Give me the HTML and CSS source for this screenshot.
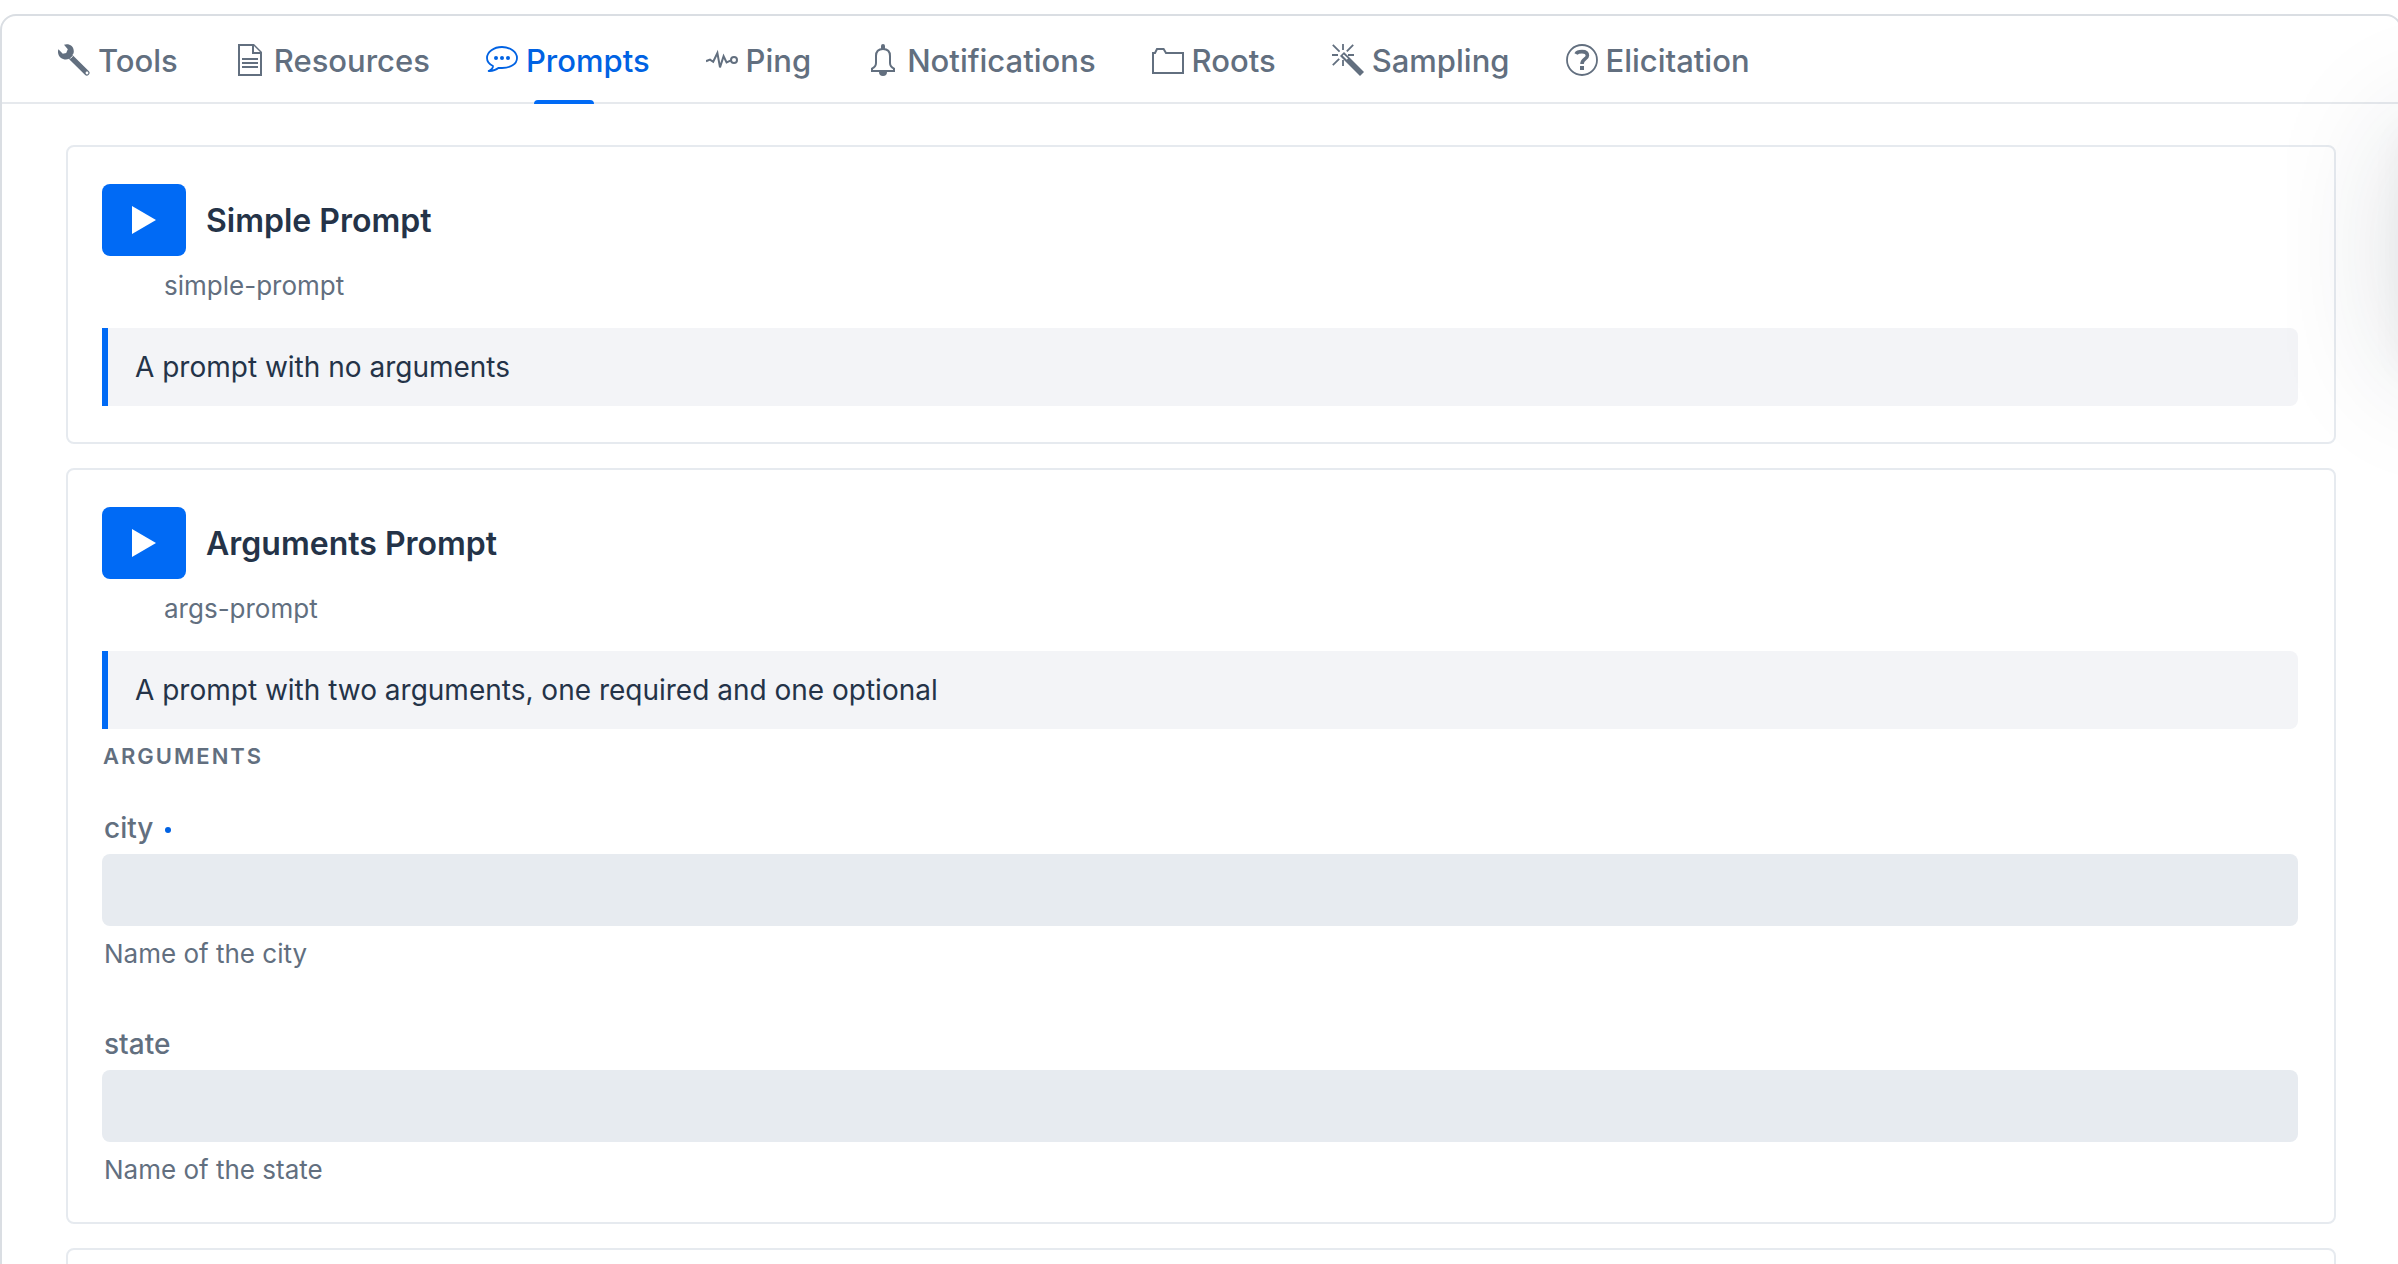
FILE: index.html
```html
<!DOCTYPE html>
<html lang="en">
<head>
    <meta charset="UTF-8">
    <meta name="viewport" content="width=device-width, initial-scale=1.0">
    <title>Prompts</title>
    <link rel="stylesheet" href="styles.css">
</head>
<body>
    <div class="panel">
        <nav class="tabs">
            <a href="#tools" class="tab">
                <svg class="icon" viewBox="0 0 16 16"><path d="M6.8 6.9l7.6 7.5" fill="none" stroke="currentColor" stroke-width="2.7" stroke-linecap="round"/><path d="M3 .4C5.2-.5 7.9.9 7.9 3.6c0 .6-.1 1-.3 1.4L5.3 7.5C3.2 8.3.2 7 0 4.2c0-.7 0-1.1.2-1.6l2.200 2.300 1.700-.4.8-1.900z"/><circle cx="14.5" cy="14.5" r=".7" fill="#fff"/><path d="M6.1 7.3l1.200-1.200" stroke="#fff" stroke-width=".5"/></svg>
                <span>Tools</span>
            </a>
            <a href="#resources" class="tab">
                <svg class="icon" viewBox="0 0 16 16"><path fill-rule="evenodd" d="M10 0H2v16h12V4l-4-4zM13 15H3V1h6v4h4v10zM10 4V1l3 3h-3z"/><path d="M4 7h8v1H4zM4 9h8v1H4zM4 11h8v1H4z"/></svg>
                <span>Resources</span>
            </a>
            <a href="#prompts" class="tab tab-active">
                <svg class="icon" viewBox="0 0 16 16"><path fill="none" stroke="currentColor" stroke-width=".9" stroke-linejoin="round" d="M8 1.5c4.1 0 7.5 2.4 7.5 5.5s-3.4 5-7.5 5c-.6 0-1.1 0-1.6-.1C5 13 3 13.6 1.3 13.5c1.4-.6 2.2-1.5 2.2-2.5C1.6 10.1.5 8.7.5 7 .5 3.9 3.9 1.5 8 1.5z"/><circle cx="5" cy="7" r="1"/><circle cx="8" cy="7" r="1"/><circle cx="11" cy="7" r="1"/></svg>
                <span>Prompts</span>
            </a>
            <a href="#ping" class="tab">
                <svg class="icon" viewBox="0 0 16 16"><path fill="none" stroke="currentColor" d="M0 8.6l2-.8 1.6 1.100 2.100-4.400 1.300 7.200 1.800-5.600 1.500 3.100 2.200-1"/><circle cx="14" cy="8" r="1.5" fill="none" stroke="currentColor"/></svg>
                <span>Ping</span>
            </a>
            <a href="#notifications" class="tab">
                <svg class="icon" viewBox="0 0 16 16"><path fill="none" stroke="currentColor" d="M4.5 6c0-2.5 1.5-3.5 3.5-3.5s3.5 1 3.5 3.5v3.5c0 1.5.8 2.2 2 2.8v1.2h-11v-1.200c1.200-.6 2-1.300 2-2.800z"/><path d="M7 2.500V1a1 1 0 0 1 2 0v1.500zM6 14h4a2 2 0 0 1-4 0z"/></svg>
                <span>Notifications</span>
            </a>
            <a href="#roots" class="tab">
                <svg class="icon" viewBox="0 0 16 16"><path fill="none" stroke="currentColor" d="M.5 14.5v-10h1l1-2h3.300l1.200 2h8.500v10z"/></svg>
                <span>Roots</span>
            </a>
            <a href="#sampling" class="tab">
                <svg class="icon" viewBox="0 0 16 16"><path fill="none" stroke="currentColor" stroke-width=".9" d="M5.500 0v3M0 5.500h3M8 5.500h3M5.500 8v3M.4.4l3.400 3.400M10.600.4L7.400 3.700M.4 10.600l3.200-3.200"/><path d="M4 6l2-2 10 10-2 2z"/><path d="M5.300 5.800l.6-.6 2.100 2.100-.6.6z" fill="#fff"/></svg>
                <span>Sampling</span>
            </a>
            <a href="#elicitation" class="tab">
                <svg class="icon" viewBox="0 0 16 16"><circle cx="8" cy="8" r="7.5" fill="none" stroke="currentColor" stroke-width=".9"/><path fill="none" stroke="currentColor" stroke-width="1.8" d="M5 5c.5-.9 1.500-1.200 3-1.200 1.700 0 2.700.6 2.700 1.900 0 1.900-2.700 1.600-2.700 4.300"/><path d="M7 11h2v2H7z"/></svg>
                <span>Elicitation</span>
            </a>
        </nav>

        <main class="prompts">
            <section class="card">
                <div class="card-header">
                    <button class="play" aria-label="Run Simple Prompt"><svg viewBox="0 0 12 14"><path d="M0 0l12 7-12 7z"/></svg></button>
                    <h2>Simple Prompt</h2>
                </div>
                <p class="name">simple-prompt</p>
                <p class="description">A prompt with no arguments</p>
            </section>

            <section class="card">
                <div class="card-header">
                    <button class="play" aria-label="Run Arguments Prompt"><svg viewBox="0 0 12 14"><path d="M0 0l12 7-12 7z"/></svg></button>
                    <h2>Arguments Prompt</h2>
                </div>
                <p class="name">args-prompt</p>
                <p class="description">A prompt with two arguments, one required and one optional</p>
                <h3>Arguments</h3>
                <div class="field">
                    <label for="city" class="required">city</label>
                    <input type="text" id="city" aria-describedby="city-help" required>
                    <p class="helper" id="city-help">Name of the city</p>
                </div>
                <div class="field">
                    <label for="state">state</label>
                    <input type="text" id="state" aria-describedby="state-help">
                    <p class="helper" id="state-help">Name of the state</p>
                </div>
            </section>

            <section class="card"></section>
        </main>
    </div>
    <div class="side-shadow"></div>
</body>
</html>
```
FILE: styles.css
```css
* {
    box-sizing: border-box;
}

body {
    margin: 0;
    height: 100vh;
    overflow: hidden;
    position: relative;
    background-color: #fff;
    color: #243348;
    font-family: Inter, "Liberation Sans", sans-serif;
    font-size: 28px;
}

h2, h3, p {
    margin: 0;
}

.panel {
    margin: 14px -4px 0 0;
    min-height: 100vh;
    border: 2px solid #dadee3;
    border-radius: 16px;
}

/* Tabs */
.tabs {
    display: flex;
    gap: 56px;
    padding: 2px 56px 0;
    height: 88px;
    border-bottom: 2px solid #e6e9ed;
}

.tab {
    display: flex;
    align-items: center;
    gap: 8px;
    position: relative;
    color: #626f7f;
    font-size: 31px;
    font-weight: 500;
    text-decoration: none;
}

.tab-active {
    color: #0062e3;
}

.tab-active::after {
    content: "";
    position: absolute;
    left: 48px;
    bottom: -2px;
    width: 60px;
    height: 4px;
    border-radius: 4px 4px 0 0;
    background-color: #006af5;
}

.icon {
    width: 32px;
    height: 32px;
    flex: none;
    fill: currentColor;
}

/* Prompt cards */
.prompts {
    display: flex;
    flex-direction: column;
    gap: 24px;
    padding: 41px 64px;
}

.card {
    padding: 37px 36px 36px 34px;
    border: 2px solid #e6eaef;
    border-radius: 8px;
}

.card-header {
    display: flex;
    align-items: center;
    gap: 20px;
}

.card-header h2 {
    font-size: 32px;
    font-weight: 600;
}

.play {
    display: flex;
    align-items: center;
    justify-content: center;
    width: 84px;
    height: 72px;
    padding: 0;
    border: none;
    border-radius: 8px;
    background-color: #006af5;
    cursor: pointer;
}

.play svg {
    width: 24px;
    height: 28px;
    fill: #fff;
}

.name {
    margin: 10px 0 22px 62px;
    color: #626f7f;
    font-size: 26px;
    line-height: 40px;
}

.description {
    padding: 16px 27px;
    border-left: 6px solid #006af5;
    border-radius: 0 8px 8px 0;
    background-color: #f3f4f7;
    line-height: 46px;
}

.card h3 {
    margin-top: 13px;
    padding-left: 1px;
    color: #626f7f;
    font-size: 22px;
    font-weight: 600;
    line-height: 28px;
    letter-spacing: 2px;
    text-transform: uppercase;
}

/* Fields */
.field {
    padding-top: 42px;
}

.field + .field {
    margin-top: 16px;
}

.field label {
    display: block;
    padding: 0 2px;
    color: #626f7f;
    font-weight: 500;
    line-height: 32px;
}

.field .required::after {
    content: "";
    display: inline-block;
    width: 6px;
    height: 6px;
    margin-left: 12px;
    border-radius: 50%;
    background-color: #0062e3;
    vertical-align: middle;
}

.field input {
    display: block;
    width: 100%;
    height: 72px;
    margin: 10px 0 12px;
    padding: 0 16px;
    border: none;
    border-radius: 8px;
    background-color: #e7ebf0;
    color: #243348;
    font: inherit;
}

.helper {
    padding: 0 2px;
    color: #626f7f;
    font-size: 26px;
    line-height: 32px;
}

/* Soft shadow from the panel past the right edge */
.side-shadow {
    position: absolute;
    top: 130px;
    left: 100%;
    width: 400px;
    height: 240px;
    box-shadow: 0 0 130px rgba(30, 40, 60, 0.15), 0 0 30px rgba(30, 40, 60, 0.04);
    pointer-events: none;
}
```
